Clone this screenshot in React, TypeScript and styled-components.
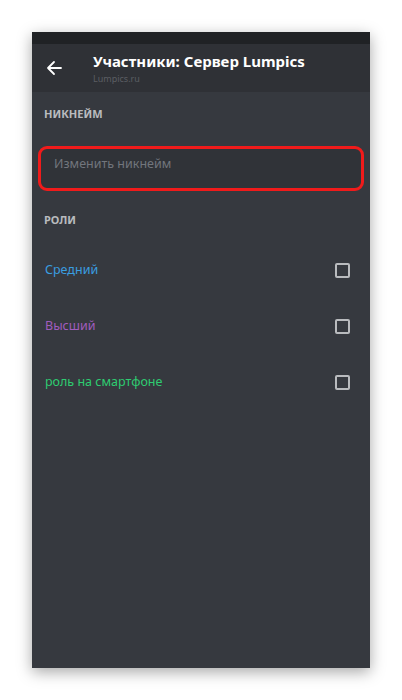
import styled, { createGlobalStyle } from 'styled-components';

const GlobalStyle = createGlobalStyle`
  html, body {
    margin: 0;
    padding: 0;
    background: #fff;
  }
  body {
    font-family: "Noto Sans", "Open Sans", sans-serif;
  }
`;

const Page = styled.div`
  width: 402px;
  height: 700px;
  padding: 32px 0 0 32px;
  box-sizing: border-box;
`;

const Phone = styled.div`
  width: 338px;
  height: 636px;
  background: #36393f;
  box-shadow: 0 4px 14px rgba(0, 0, 0, 0.35);
  display: flex;
  flex-direction: column;
`;

const StatusBar = styled.div`
  height: 12px;
  background: #202225;
`;

const Header = styled.div`
  height: 48px;
  background: #2f3136;
  display: flex;
  align-items: center;
  padding-left: 12px;
`;

const BackButton = styled.div`
  width: 20px;
  height: 20px;
  display: flex;
  align-items: center;
  justify-content: center;
  margin-right: 29px;
`;

const TitleBlock = styled.div`
  display: flex;
  flex-direction: column;
  gap: 2px;
`;

const Title = styled.div`
  color: #ffffff;
  font-size: 15px;
  font-weight: 700;
  line-height: 20px;
`;

const Subtitle = styled.div`
  color: #5b5e63;
  font-size: 9px;
  line-height: 12px;
`;

const Content = styled.div`
  padding: 14px 6px 0 6px;
  display: flex;
  flex-direction: column;
`;

const SectionLabel = styled.div`
  color: #b9bbbe;
  font-size: 11px;
  font-weight: 700;
  line-height: 16px;
  padding-left: 6px;
`;

const NickField = styled.div`
  margin-top: 24px;
  height: 45px;
  box-sizing: border-box;
  border: 3px solid #f01b1b;
  border-radius: 9px;
  background: #303338;
  padding: 7px 0 0 13px;
  color: #72767d;
  font-size: 12.5px;
  line-height: 16px;
`;

const RolesLabel = styled(SectionLabel)`
  margin-top: 21px;
`;

const RoleList = styled.div`
  display: flex;
  flex-direction: column;
  margin-top: 32px;
  gap: 36px;
`;

const RoleRow = styled.div`
  display: flex;
  align-items: center;
  justify-content: space-between;
  height: 20px;
  padding: 0 14px 0 7px;
`;

const RoleName = styled.span<{ $color: string }>`
  color: ${(p) => p.$color};
  font-size: 12.5px;
  line-height: 16px;
`;

const Checkbox = styled.div`
  width: 15px;
  height: 15px;
  box-sizing: border-box;
  border: 2px solid #b9bbbe;
  border-radius: 2px;
`;

const roles = [
  { name: 'Средний', color: '#3a9ee0' },
  { name: 'Высший', color: '#a05cbe' },
  { name: 'роль на смартфоне', color: '#2ecc71' },
];

export default function App() {
  return (
    <Page>
      <GlobalStyle />
      <Phone>
        <StatusBar />
        <Header>
          <BackButton>
            <svg width="16" height="16" viewBox="0 0 16 16" fill="none">
              <path
                d="M15 8H2M8 2L2 8l6 6"
                stroke="#fff"
                strokeWidth="1.8"
                strokeLinecap="round"
                strokeLinejoin="round"
              />
            </svg>
          </BackButton>
          <TitleBlock>
            <Title>Участники: Сервер Lumpics</Title>
            <Subtitle>Lumpics.ru</Subtitle>
          </TitleBlock>
        </Header>
        <Content>
          <SectionLabel>НИКНЕЙМ</SectionLabel>
          <NickField>Изменить никнейм</NickField>
          <RolesLabel>РОЛИ</RolesLabel>
          <RoleList>
            {roles.map((r) => (
              <RoleRow key={r.name}>
                <RoleName $color={r.color}>{r.name}</RoleName>
                <Checkbox />
              </RoleRow>
            ))}
          </RoleList>
        </Content>
      </Phone>
    </Page>
  );
}
